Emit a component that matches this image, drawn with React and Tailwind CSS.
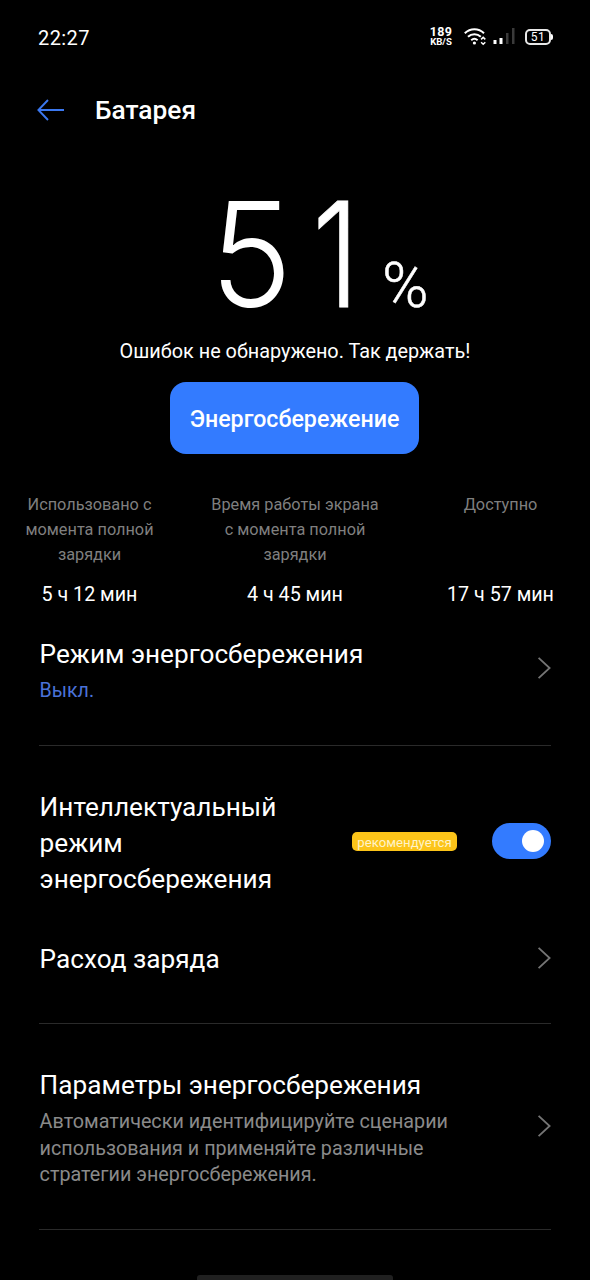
const STATS = [
  { label: ['Использовано с', 'момента полной', 'зарядки'], value: '5 ч 12 мин', width: 'w-[179px]' },
  { label: ['Время работы экрана', 'с момента полной', 'зарядки'], value: '4 ч 45 мин', width: 'w-[232px]' },
  { label: ['Доступно'], value: '17 ч 57 мин', width: 'w-[179px]' },
]

function StatusBar() {
  return (
    <header className="flex h-[74px] items-center justify-between pl-[38px] pr-[37px]">
      <span className="pt-px text-[20px] leading-6 tracking-[0.4px]">22:27</span>
      <div className="flex items-center">
        <div className="flex w-6 flex-col items-center pb-[2px] font-bold">
          <span className="text-[12.5px] leading-[11px] tracking-[0.3px]">189</span>
          <span className="text-[9.6px] leading-[10px]">KB/S</span>
        </div>
        <svg className="ml-[11px]" width="24" height="20" viewBox="0 0 24 20" fill="none">
          <path d="M0.8 6.2C6.3 0.8 14.5 0.8 20 6.2" stroke="#fff" strokeWidth="2" />
          <path d="M4 9.8C7.6 6.4 13.2 6.4 16.8 9.8" stroke="#fff" strokeWidth="2" />
          <path d="M7.2 13.2C9.2 11.4 11.6 11.4 13.6 13.2" stroke="#fff" strokeWidth="2" />
          <circle cx="10.4" cy="16" r="1.6" fill="#fff" />
          <path d="M17.1 12.4L19.2 10.4L21.3 12.4M17.1 15.2L19.2 17.2L21.3 15.2" stroke="#fff" strokeWidth="1.5" />
        </svg>
        <svg className="ml-[5px]" width="24" height="20" viewBox="0 0 24 20">
          <rect x="0.5" y="13" width="3" height="4" fill="#fff" />
          <rect x="6.5" y="11" width="3" height="6" fill="#fff" />
          <rect x="13" y="6" width="2.5" height="11" fill="#3a3a3a" />
          <rect x="19" y="1" width="2.5" height="16" fill="#3a3a3a" />
        </svg>
        <div className="ml-[8px] flex items-center pb-px">
          <span className="flex h-[16px] w-[26px] items-center justify-center rounded-[5px] border-2 border-[#e8e8e8] text-[12px] leading-none tracking-[0.5px]">
            51
          </span>
          <span className="h-[6px] w-[2px] rounded-r-sm bg-white" />
        </div>
      </div>
    </header>
  )
}

function Chevron() {
  return (
    <svg className="shrink-0" width="14" height="24" viewBox="0 0 14 24" fill="none">
      <path d="M1.6 1.8L12.6 12L1.6 22.2" stroke="#757575" strokeWidth="1.8" />
    </svg>
  )
}

function Divider() {
  return <div className="h-px w-full bg-[#2a2a2a]" />
}

export default function App() {
  return (
    <div className="flex h-[1280px] w-[590px] flex-col overflow-hidden bg-black font-['Roboto',sans-serif] text-white">
      <StatusBar />

      <div className="flex h-[72px] items-center pl-[37px]">
        <svg width="28" height="24" viewBox="0 0 28 24" fill="none">
          <path d="M27 12H1.6M11 2L1.4 12L11 22" stroke="#3b78f0" strokeWidth="1.9" />
        </svg>
        <h1 className="ml-[30px] text-[26.3px] leading-8 font-medium">Батарея</h1>
      </div>

      {/* Уровень заряда */}
      <section className="flex flex-col items-center">
        <div className="flex h-[190px] w-full items-baseline pt-[38px] pl-[210px]">
          <span className="flex font-['Inter',sans-serif] text-[146px] leading-[140px] font-light">
            <span className="origin-left scale-x-[0.95]">5</span>
            <span className="ml-[5px] origin-right scale-x-[0.82] [-webkit-text-stroke:0.8px_white]">1</span>
          </span>
          <span className="ml-[23px] text-[63px] leading-[60px] font-light [-webkit-text-stroke:0.5px_white]">%</span>
        </div>
        <p className="pt-px text-[19.85px] leading-[30px]">Ошибок не обнаружено. Так держать!</p>
        <button className="mt-[15px] mr-[1px] h-[72px] w-[249px] rounded-[16px] bg-[#337bff] pt-[3px] text-[23.2px] font-medium">
          Энергосбережение
        </button>
      </section>

      <section className="mt-[38px] flex h-[125px]">
        {STATS.map((stat) => (
          <div key={stat.value} className={`flex flex-col items-center ${stat.width}`}>
            <div className="h-[88px] text-center text-[16.3px] leading-[25.2px] text-[#7f7f7f]">
              {stat.label.map((line) => (
                <div key={line}>{line}</div>
              ))}
            </div>
            <div className="text-[19.7px] leading-[30px]">{stat.value}</div>
          </div>
        ))}
      </section>

      <main className="flex flex-col pr-[39px] pl-[39px]">
        <div className="flex h-[128px] justify-between pt-[19px]">
          <div className="pl-[0.6px]">
            <h2 className="text-[26.2px] leading-9">Режим энергосбережения</h2>
            <p className="mt-[5px] text-[19.6px] leading-[28px] text-[#4a72d8]">Выкл.</p>
          </div>
          <div className="pt-5"><Chevron /></div>
        </div>
        <Divider />

        <div className="mt-[43px] flex h-[108px] items-center">
          <h2 className="w-[313px] pr-10 pl-[0.6px] text-[26.2px] leading-9">
            Интеллектуальный режим энергосбережения
          </h2>
          <span className="mb-[3px] flex h-[19px] w-[105px] items-center justify-center rounded-[5px] bg-[#fcc419] pt-[2px] text-[13.2px] text-[#fff3c8]">
            рекомендуется
          </span>
          <div className="mb-1 ml-auto flex h-9 w-[59px] items-center justify-end rounded-full bg-[#337bff] pr-[7px]">
            <span className="size-[22px] rounded-full bg-white" />
          </div>
        </div>

        <div className="mt-[44px] mb-[46px] flex h-9 items-center justify-between">
          <h2 className="pl-[0.6px] text-[26.2px] leading-9">Расход заряда</h2>
          <div className="pb-[2px]"><Chevron /></div>
        </div>
        <Divider />

        <div className="mt-[43px] flex h-[162px] justify-between">
          <div className="pl-[0.6px]">
            <h2 className="text-[26.2px] leading-9">Параметры энергосбережения</h2>
            <p className="mt-[6px] w-[420px] text-[19.75px] leading-[26.5px] text-[#8a8a8a]">
              Автоматически идентифицируйте сценарии использования и применяйте различные стратегии энергосбережения.
            </p>
          </div>
          <div className="pt-[47px]"><Chevron /></div>
        </div>
        <Divider />
      </main>

      <div className="mx-auto mt-auto h-[5px] w-[196px] shrink-0 rounded-t-[3px] bg-[#202020]" />
    </div>
  )
}
